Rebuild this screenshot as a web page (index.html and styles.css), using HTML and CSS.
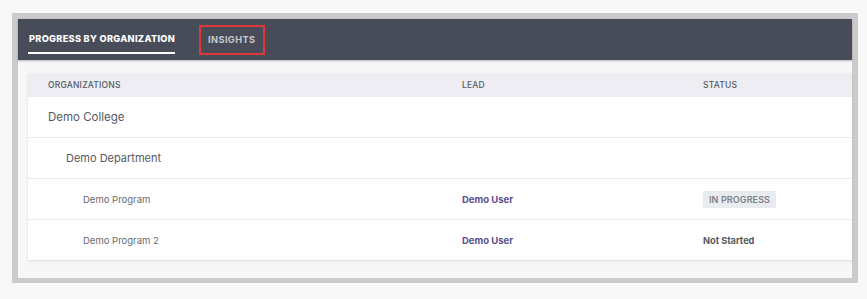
FILE: index.html
```html
<!DOCTYPE html>
<html lang="en">
<head>
<meta charset="utf-8">
<title>Progress by Organization</title>
<link rel="stylesheet" href="styles.css">
</head>
<body>
<div class="frame">
  <div class="topbar">
    <div class="tab tab-active">PROGRESS BY ORGANIZATION</div>
    <div class="tab tab-insights">INSIGHTS</div>
  </div>
  <div class="content">
    <div class="card">
      <div class="row head">
        <div class="c1">ORGANIZATIONS</div>
        <div class="c2">LEAD</div>
        <div class="c3">STATUS</div>
      </div>
      <div class="row">
        <div class="c1 lvl1">Demo College</div>
        <div class="c2"></div>
        <div class="c3"></div>
      </div>
      <div class="row">
        <div class="c1 lvl2">Demo Department</div>
        <div class="c2"></div>
        <div class="c3"></div>
      </div>
      <div class="row">
        <div class="c1 lvl3">Demo Program</div>
        <div class="c2 lead">Demo User</div>
        <div class="c3"><span class="badge">IN PROGRESS</span></div>
      </div>
      <div class="row last">
        <div class="c1 lvl3">Demo Program 2</div>
        <div class="c2 lead">Demo User</div>
        <div class="c3"><span class="status">Not Started</span></div>
      </div>
    </div>
  </div>
</div>
</body>
</html>
```

FILE: styles.css
```css
html, body {
  margin: 0;
  padding: 0;
}
body {
  background: #f8f8f8;
  font-family: Inter, "Noto Sans", Arial, sans-serif;
  padding: 13px 0 0 12px;
  width: 867px;
  height: 299px;
  box-sizing: border-box;
  overflow: hidden;
}
.frame {
  width: 846px;
  height: 270px;
  box-sizing: border-box;
  border: 6px solid #cbcbcb;
  background: #f7f7f7;
  display: flex;
  flex-direction: column;
}
.topbar {
  height: 41px;
  flex: none;
  background: #474c58;
  display: flex;
  align-items: flex-start;
  box-shadow: 0 1px 2px rgba(0,0,0,0.25);
  position: relative;
  z-index: 1;
}
.tab {
  font-size: 9.2px;
  font-weight: 800;
  letter-spacing: 0.3px;
  line-height: 11px;
}
.tab-active {
  color: #ffffff;
  margin-left: 10px;
  padding: 14px 0 8px 1px;
  border-bottom: 2px solid #ffffff;
}
.tab-insights {
  color: #c6c9d0;
  font-weight: 700;
  margin-left: 24px;
  margin-top: 6px;
  height: 30px;
  box-sizing: border-box;
  border: 2px solid #e0383a;
  padding: 0 8px 0 7px;
  line-height: 26px;
  letter-spacing: 0.4px;
}
.content {
  flex: 1;
  padding: 13px 0 18px 10px;
  background: #f7f7f7;
}
.card {
  background: #ffffff;
  box-shadow: 0 1px 2px rgba(0,0,0,0.12);
}
.row {
  display: grid;
  grid-template-columns: 434px 241px 1fr;
  align-items: stretch;
  height: 40px;
  border-bottom: 1px solid #ececec;
  color: #555a60;
}
.row > div {
  display: flex;
  align-items: center;
}
.row.last {
  border-bottom: none;
}
.row.head {
  height: 24px;
  border-bottom: none;
  background: #ededf3;
  font-size: 8.5px;
  font-weight: 500;
  color: #555a60;
  letter-spacing: 0.2px;
}
.c1 {
  padding-left: 20px;
}
.lvl1 {
  font-size: 11.5px;
  color: #55595e;
}
.lvl2 {
  padding-left: 38px;
  font-size: 11px;
  color: #55595e;
}
.lvl3 {
  padding-left: 55px;
  font-size: 9.5px;
  color: #666a70;
}
.lead {
  font-size: 9.5px;
  font-weight: 700;
  color: #5b4f8e;
}
.badge {
  display: inline-block;
  background: #e9ecef;
  color: #7c8188;
  font-size: 9px;
  font-weight: 600;
  padding: 3px 6px;
  line-height: 11px;
  letter-spacing: 0.1px;
}
.status {
  font-size: 9.2px;
  font-weight: 700;
  color: #55595e;
  line-height: 11px;
}
```
